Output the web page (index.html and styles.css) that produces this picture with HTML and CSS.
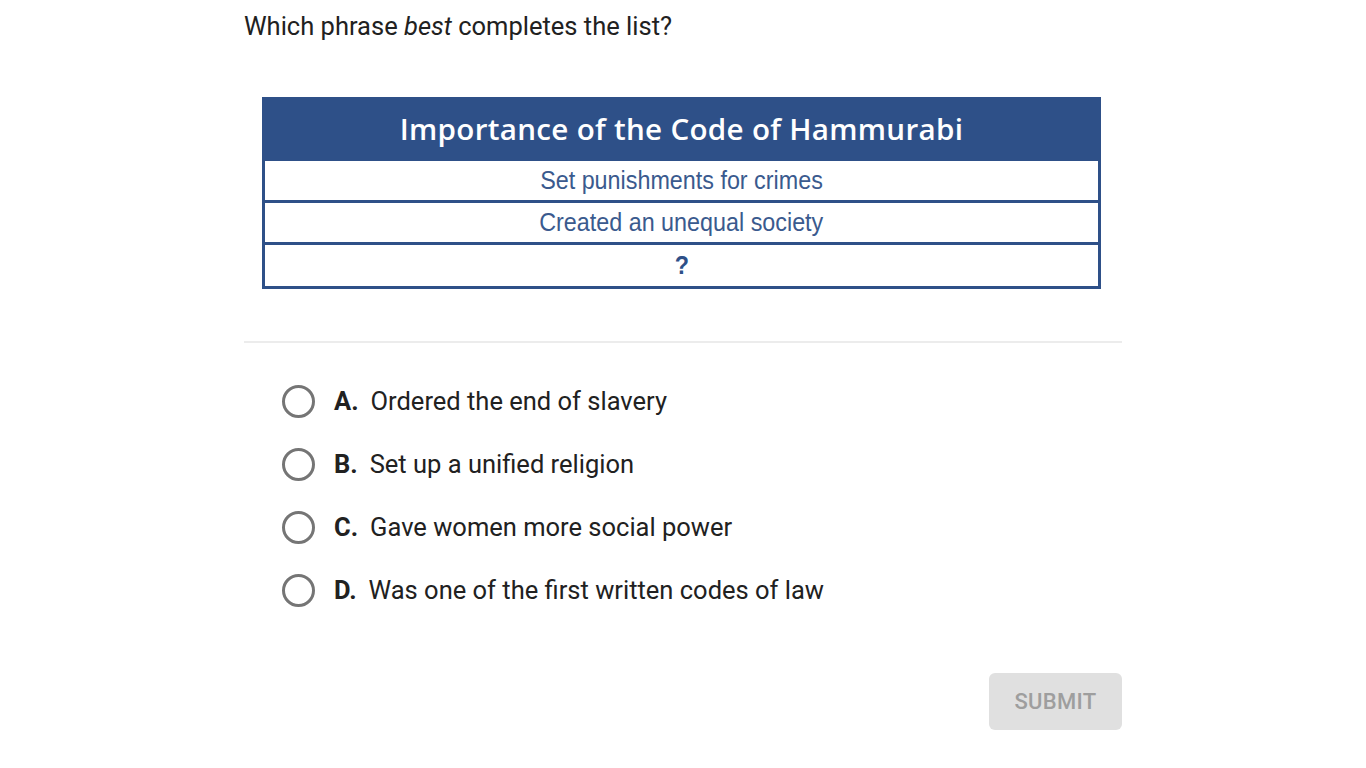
FILE: index.html
```html
<!DOCTYPE html>
<html>
<head>
<meta charset="utf-8">
<link rel="stylesheet" href="styles.css">
</head>
<body>
<main class="page">
  <p class="question">Which phrase <em>best</em> completes the list?</p>
  <div class="figure">
    <div class="table">
      <div class="thead">Importance of the Code of Hammurabi</div>
      <div class="trow"><span class="cell">Set punishments for crimes</span></div>
      <div class="trow"><span class="cell">Created an unequal society</span></div>
      <div class="trow q"><span class="cell">?</span></div>
    </div>
  </div>
  <hr class="divider">
  <ul class="options">
    <li class="option"><span class="radio"></span><span class="letter">A.</span><span class="text">Ordered the end of slavery</span></li>
    <li class="option"><span class="radio"></span><span class="letter">B.</span><span class="text">Set up a unified religion</span></li>
    <li class="option"><span class="radio"></span><span class="letter">C.</span><span class="text">Gave women more social power</span></li>
    <li class="option"><span class="radio"></span><span class="letter">D.</span><span class="text">Was one of the first written codes of law</span></li>
  </ul>
  <div class="actions">
    <button class="submit">SUBMIT</button>
  </div>
</main>
</body>
</html>
```
FILE: styles.css
```css
html, body {
  margin: 0;
  padding: 0;
  background: #ffffff;
}
body {
  font-family: Roboto, "Liberation Sans", sans-serif;
  color: #212121;
}
.page {
  width: 878px;
  margin-left: 244px;
}
.question {
  margin: 0;
  padding-top: 10px;
  font-size: 25.5px;
  line-height: 32px;
  color: #212121;
}
.question em {
  font-style: italic;
}
.figure {
  margin-top: 55px;
  padding-left: 18px;
}
.table {
  width: 833px;
  border: 3px solid #2e5088;
  background: #fff;
}
.thead {
  background: #2e5088;
  color: #ffffff;
  height: 58px;
  display: flex;
  align-items: center;
  justify-content: center;
  font-family: "Open Sans", sans-serif;
  font-weight: 600;
  font-size: 29.6px;
  letter-spacing: 0.3px;
  padding-bottom: 2px;
  box-sizing: border-box;
}
.trow {
  height: 39px;
  border-top: 3px solid #2e5088;
  display: flex;
  align-items: center;
  justify-content: center;
  font-family: "Liberation Sans", Arial, sans-serif;
  font-size: 25.5px;
  color: #3a5a8e;
}
.cell {
  display: inline-block;
  transform: scaleX(0.915);
}
.trow.q {
  height: 41px;
  font-weight: 700;
  color: #2e5088;
}
.divider {
  border: 0;
  height: 2px;
  background: #ececec;
  margin: 52px 0 0 0;
}
.options {
  list-style: none;
  margin: 0;
  padding: 42px 0 0 38px;
  display: flex;
  flex-direction: column;
  gap: 31px;
}
.option {
  display: flex;
  align-items: center;
  height: 32px;
  font-size: 25.5px;
}
.radio {
  width: 27px;
  height: 27px;
  border: 3px solid #757575;
  border-radius: 50%;
  flex: none;
  margin-right: 19px;
}
.letter {
  font-weight: 700;
  margin-right: 12px;
}
.text {
  color: #212121;
}
.actions {
  display: flex;
  justify-content: flex-end;
  margin-top: 67px;
}
.submit {
  width: 133px;
  height: 57px;
  border: 0;
  border-radius: 6px;
  background: #e0e0e0;
  color: #9e9e9e;
  font-family: Roboto, sans-serif;
  font-weight: 500;
  font-size: 22px;
  letter-spacing: 0.3px;
}
```
